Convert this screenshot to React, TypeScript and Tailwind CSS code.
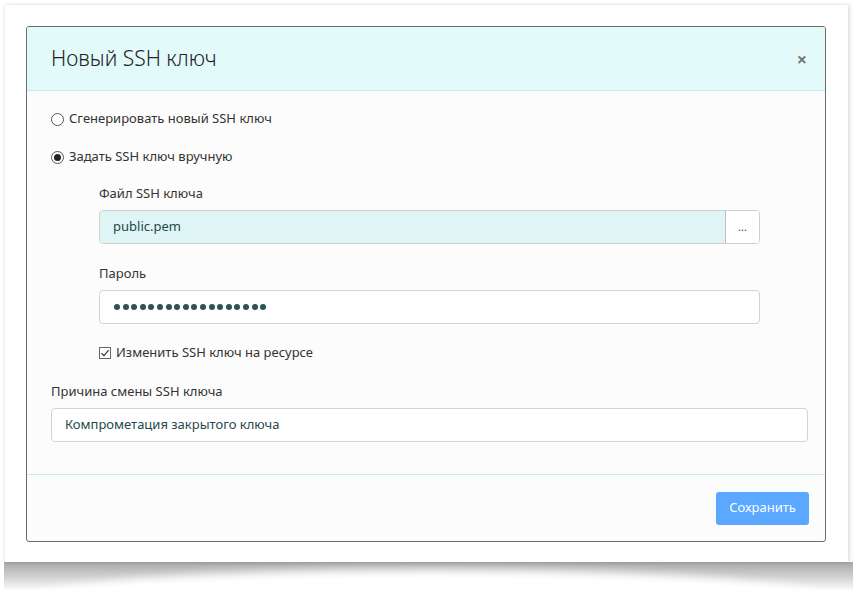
import React from "react";

function Radio({ checked }: { checked?: boolean }) {
  return (
    <span className="inline-flex h-[13px] w-[13px] items-center justify-center rounded-full border border-[#555] bg-white">
      {checked && <span className="h-[7px] w-[7px] rounded-full bg-[#222]" />}
    </span>
  );
}

export default function App() {
  const dots = Array.from({ length: 18 });
  return (
    <div
      className="h-[591px] w-[860px] overflow-hidden bg-white pl-[5px] pt-[5px] text-[#333]"
      style={{ fontFamily: '"Noto Sans", "Open Sans", sans-serif' }}
    >
      <div className="relative z-10 h-[557px] w-[843px] bg-white pl-[21px] pt-[21px] shadow-[2px_0_4px_rgba(0,0,0,0.12),-1px_0_3px_rgba(0,0,0,0.08)]">
        <div className="flex h-[516px] w-[800px] flex-col overflow-hidden rounded-[3px] border border-[#6b6b6b] bg-[#fcfcfc]">
          <div className="flex h-[64px] items-center justify-between border-b border-[#c6eeee] bg-[#e2fafa] pl-[24px] pr-[18px]">
            <div className="text-[21px] font-light text-[#222]">Новый SSH ключ</div>
            <div className="text-[18px] font-bold leading-none text-[#777]">×</div>
          </div>
          <div className="flex flex-1 flex-col px-[24px] pt-[19px]">
            <label className="flex h-[18px] items-center gap-[5px] text-[13px]">
              <Radio />
              <span>Сгенерировать новый SSH ключ</span>
            </label>
            <label className="mt-[20px] flex h-[18px] items-center gap-[5px] text-[13px]">
              <Radio checked />
              <span>Задать SSH ключ вручную</span>
            </label>
            <div className="ml-[48px] mt-[18px] w-[661px]">
              <div className="h-[18px] text-[13px] leading-[18px]">Файл SSH ключа</div>
              <div className="mt-[8px] flex h-[34px] rounded-[4px] border border-[#cfcfcf]">
                <div className="flex flex-1 items-center rounded-l-[3px] bg-[#dff5f5] px-[13px] text-[13px] text-[#1f4a4a]">
                  public.pem
                </div>
                <div className="flex w-[34px] items-center justify-center rounded-r-[3px] border-l border-[#bdbdbd] bg-white text-[11px] text-[#444]">
                  ...
                </div>
              </div>
              <div className="mt-[20px] h-[18px] text-[13px] leading-[18px]">Пароль</div>
              <div className="mt-[8px] flex h-[34px] items-center gap-[2.6px] rounded-[4px] border border-[#d4d4d4] bg-white px-[14px]">
                {dots.map((_, i) => (
                  <span key={i} className="h-[6px] w-[6px] rounded-full bg-[#2f5252]" />
                ))}
              </div>
              <label className="mt-[20px] flex h-[18px] items-center gap-[5px] text-[13px]">
                <span className="flex h-[12px] w-[12px] items-center justify-center border border-[#666] bg-white">
                  <svg width="10" height="10" viewBox="0 0 10 10">
                    <path d="M1.5 5.2 L4 7.6 L8.6 2.2" fill="none" stroke="#333" strokeWidth="1.2" />
                  </svg>
                </span>
                <span>Изменить SSH ключ на ресурсе</span>
              </label>
            </div>
            <div className="mt-[20px] h-[18px] text-[13px] leading-[18px]">Причина смены SSH ключа</div>
            <div className="mt-[8px] flex h-[34px] w-[757px] items-center rounded-[4px] border border-[#d4d4d4] bg-white px-[13px] text-[13px] text-[#1f4a4a]">
              Компрометация закрытого ключа
            </div>
          </div>
          <div className="flex h-[67px] items-center justify-end border-t border-[#c6eeee] pr-[16px]">
            <button className="h-[33px] w-[93px] rounded-[3px] bg-[#5aa8ff] text-[13px] text-white">
              Сохранить
            </button>
          </div>
        </div>
      </div>
      <div className="relative -ml-[5px] h-[29px] w-[860px] overflow-hidden">
        <div className="absolute left-[4px] top-0 h-[29px] w-[849px] bg-gradient-to-b from-[#a9a9a9] via-[#d0d0d0] to-white" />
        <div className="absolute left-[30px] top-[8px] h-[60px] w-[800px] rounded-[50%] bg-white blur-[5px]" />
      </div>
    </div>
  );
}
